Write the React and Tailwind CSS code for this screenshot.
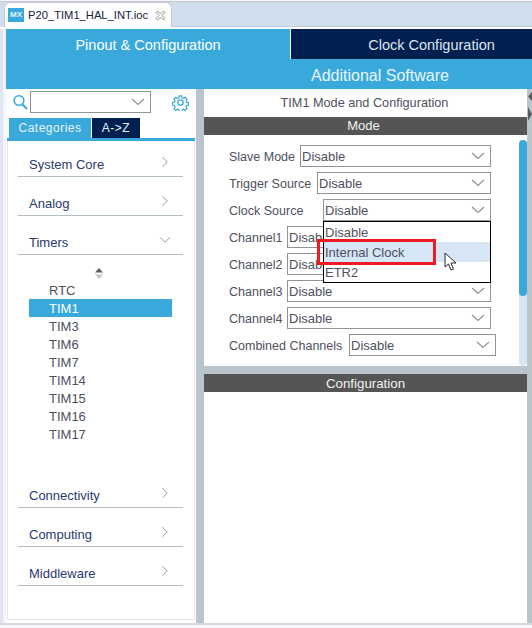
import React from "react";
import { ChevronDown, ChevronRight } from "lucide-react";

const FONT = "font-['Liberation_Sans',Arial,sans-serif]";

const Caret = () => (
  <svg width="14" height="8" viewBox="0 0 14 8" className="shrink-0" fill="none">
    <path d="M1 1l6 5.5L13 1" stroke="#8c9296" strokeWidth="1.2" />
  </svg>
);

// one combo box of the mode form
const Select = ({ value = "Disable", className = "" }) => (
  <div className={`h-[22px] border border-[#8f9498] bg-white flex items-center justify-between pl-[1px] pr-[5px] text-[13px] text-[#505060] ${className}`}>
    <span className="pt-[2px]">{value}</span>
    <Caret />
  </div>
);

const FormRow = ({ label, selectClass = "w-[204px]" }) => (
  <div className="flex items-center justify-between">
    <span className="pt-[2px] text-[12.5px] text-[#50505e] whitespace-nowrap">{label}</span>
    <Select className={selectClass} />
  </div>
);

const Category = ({ label, open, first }) => (
  <div className={`${first ? "h-[36px]" : "h-[39px]"} ml-[10px] mr-[11px] border-b border-[#b4c0c7] flex items-end justify-between pb-[3px] pl-[11px] pr-[11px] text-[13px] text-[#2c3a70]`}>
    <span className="leading-[16px]">{label}</span>
    {open ? (
      <ChevronDown size={18} strokeWidth={1} className="text-[#77797c] mb-[2px] -mr-[2px]" />
    ) : (
      <ChevronRight size={18} strokeWidth={1} className="text-[#77797c] mb-[2px] -mr-[2px]" />
    )}
  </div>
);

const timers = ["RTC", "TIM1", "TIM3", "TIM6", "TIM7", "TIM14", "TIM15", "TIM16", "TIM17"];

export default function App() {
  return (
    <div className={`${FONT} relative w-[532px] h-[628px] overflow-hidden bg-[#f6f6f8]`}>
      {/* editor tab strip */}
      <div className="h-[28px] mt-[1px] bg-[#d0dfee] border-t border-[#c4c8da] pl-[4px] relative">
        <div className="h-[25px] w-[168px] bg-white rounded-t-[6px] border border-b-0 border-[#c4cad8] flex items-center pl-[3px] text-[11.2px] text-[#14213d]">
          <div className="w-[16px] h-[14px] bg-[#39a9dc] text-[#e8f5fb] text-[8px] font-bold flex items-center justify-center shrink-0">MX</div>
          <span className="ml-[4px] whitespace-nowrap">P20_TIM1_HAL_INT.ioc</span>
          <svg width="11" height="11" viewBox="0 0 11 11" className="ml-[7px] shrink-0" fill="none" stroke="#8a8f92" strokeWidth="1">
            <path d="M1 2.5L2.5 1 5.5 4 8.5 1 10 2.5 7 5.5 10 8.5 8.5 10 5.5 7 2.5 10 1 8.5 4 5.5z" />
          </svg>
        </div>
        <div className="absolute left-0 right-0 bottom-0 h-[2px] bg-white" />
        <div className="absolute left-[172px] right-0 bottom-[2px] h-[1px] bg-[#c4c8da]" />
      </div>

      <div className="flex h-[594px]">
        <div className="w-[3px] bg-[#dfe5f4]" />
        <div className="w-[3px] bg-[#f4f4f6]" />
        <div className="flex-1 flex flex-col min-w-0">
          {/* perspective header */}
          <div className="h-[60px] bg-[#39a9dc] text-white flex flex-col">
            <div className="h-[30px] flex">
              <div className="w-[284px] flex items-center justify-center text-[14.5px] pt-[4px]">Pinout &amp; Configuration</div>
              <div className="flex-1 bg-[#002052] border-l border-white flex items-center justify-center text-[14.5px] text-[#dfe6ee] pt-[4px] pl-[40px]">Clock Configuration</div>
            </div>
            <div className="h-[30px] flex items-center text-[16px] pl-[305px] pt-[4px] text-[#eaf6fb]">Additional Software</div>
          </div>

          <div className="flex-1 flex min-h-0">
            {/* left column */}
            <div className="w-[190px] bg-white flex flex-col">
              <div className="h-[49px] pt-[2px] pl-[7px] pr-[7px] relative">
                <div className="flex items-center">
                  <svg width="15" height="16" viewBox="0 0 15 16" fill="none" stroke="#39a9dc" className="shrink-0">
                    <circle cx="6" cy="6.5" r="4.8" strokeWidth="1.6" />
                    <path d="M9.5 10.5L14 15" strokeWidth="2" />
                  </svg>
                  <div className="ml-[2px] w-[122px] h-[22px] border border-[#8f9498] flex items-center justify-end pr-[5px]">
                    <Caret />
                  </div>
                  <svg width="17" height="17" viewBox="0 0 24 24" fill="none" stroke="#39a9dc" strokeWidth="1.9" className="ml-[21px] shrink-0">
                    <circle cx="12" cy="12" r="3.8" />
                    <path d="M10 1.5h4l.6 3 2.2.9 2.6-1.7 2.9 2.9-1.7 2.6.9 2.2 3 .6v4l-3 .6-.9 2.2 1.7 2.6-2.9 2.9-2.6-1.7-2.2.9-.6 3h-4l-.6-3-2.2-.9-2.6 1.7-2.9-2.9 1.7-2.6-.9-2.2-3-.6v-4l3-.6.9-2.2-1.7-2.6 2.9-2.9 2.6 1.7 2.2-.9z" transform="translate(1.2 1.2) scale(.9)" />
                  </svg>
                </div>
              </div>
              <div className="h-[23px] -mt-[20px] flex items-start pl-[3px] text-[12px] tracking-[0.5px] text-[#e8f3f9]">
                <div className="w-[82px] h-[20px] bg-[#39a9dc] flex items-center justify-center">Categories</div>
                <div className="ml-[1px] w-[48px] h-[20px] bg-[#002052] flex items-center justify-center">A-&gt;Z</div>
              </div>
              <div className="h-[3px] -mt-[3px] mx-[1px] bg-[#39a9dc]" />
              <div className="flex-1 mx-[1px] border-x border-b border-[#e6e8ea] mb-[3px]">
                <Category label="System Core" first />
                <Category label="Analog" />
                <Category label="Timers" open />
                <div className="flex justify-center w-[186px] pt-[13px] h-[26px] pr-[4px]">
                  <svg width="8" height="11" viewBox="0 0 8 11">
                    <path d="M4 0l4 4.5H0z" fill="#5a5d5f" />
                    <path d="M4 11L0 6.5h8z" fill="#c2c6c8" />
                  </svg>
                </div>
                <div className="ml-[21px] mr-[22px]">
                  {timers.map((name) => (
                    <div key={name} className={`h-[18px] pl-[20px] pt-[1px] flex items-center text-[13px] ${name === "TIM1" ? "bg-[#39a9dc] text-white" : "text-[#50505e]"}`}>
                      {name}
                    </div>
                  ))}
                </div>
                <div className="h-[26px]" />
                <Category label="Connectivity" />
                <Category label="Computing" />
                <Category label="Middleware" />
              </div>
            </div>

            <div className="w-[8px] bg-[#b9c5cb]" />

            {/* right column */}
            <div className="w-[323px] flex flex-col">
              <div className="h-[277px] bg-white flex flex-col relative">
                <div className="h-[28px] flex items-center justify-center text-[12.7px] text-[#50505e] pr-[2px] pt-[2px]">TIM1 Mode and Configuration</div>
                <div className="h-[18px] bg-[#545554] flex items-center justify-center text-[13px] text-[#f2f2f2] pr-[4px]">Mode</div>
                <div className="flex-1 relative pt-[10px] pl-[25px] pr-[36px]">
                  <div className="flex flex-col gap-[5px] w-[262px]">
                    <FormRow label="Slave Mode" selectClass="w-[191px]" />
                    <FormRow label="Trigger Source" selectClass="w-[174px]" />
                    <FormRow label="Clock Source" selectClass="w-[168px]" />
                    <FormRow label="Channel1" />
                    <FormRow label="Channel2" />
                    <FormRow label="Channel3" />
                    <FormRow label="Channel4" />
                    <div className="flex items-center justify-between w-[267px]">
                      <span className="pt-[2px] text-[12.5px] text-[#50505e] whitespace-nowrap">Combined Channels</span>
                      <Select className="w-[147px]" />
                    </div>
                  </div>
                  {/* open dropdown list */}
                  <div className="absolute left-[119px] top-[86px] w-[168px] h-[62px] bg-white border border-black flex flex-col text-[13px] text-[#50505e]">
                    <div className="h-[20px] flex items-center pl-[1px] pt-[2px]">Disable</div>
                    <div className="h-[20px] flex items-center pl-[1px] pt-[2px] bg-[#d6e6f4]">Internal Clock</div>
                    <div className="h-[20px] flex items-center pl-[1px] pt-[2px]">ETR2</div>
                  </div>
                  <div className="absolute left-[113px] top-[104px] w-[119px] h-[26px] border-[3px] border-[#ed1c24]" />
                  <svg width="14" height="20" viewBox="0 0 14 20" className="absolute left-[240px] top-[117px]">
                    <path d="M1 1v14l3.5-3 2.5 6 2.5-1-2.5-6H12z" fill="#fff" stroke="#2a2a2a" strokeWidth="1" />
                  </svg>
                </div>
                {/* scroll bar */}
                <div className="absolute right-0 top-[51px] bottom-0 w-[8px] bg-[#d7e6f3] rounded-[4px]">
                  <div className="h-[156px] bg-[#39a9dc] rounded-[4px]" />
                </div>
              </div>
              <div className="h-[8px] bg-[#b9c5cb]" />
              <div className="flex-1 bg-white">
                <div className="h-[18px] bg-[#545554] flex items-center justify-center text-[13.3px] pt-[2px] text-[#f2f2f2]">Configuration</div>
              </div>
            </div>

            <div className="w-[5px] bg-[#b9c5cb] relative">
              <svg width="5" height="32" viewBox="0 0 5 32" className="absolute left-0 top-[2px]">
                <path d="M5 1L1 5.5 5 10z" fill="#5a5d5f" />
                <path d="M1 16l4 7-4 7z" fill="#5a5d5f" />
              </svg>
            </div>
          </div>
        </div>
      </div>
      <div className="h-[2px] bg-[#d5d9dc]" />
    </div>
  );
}
